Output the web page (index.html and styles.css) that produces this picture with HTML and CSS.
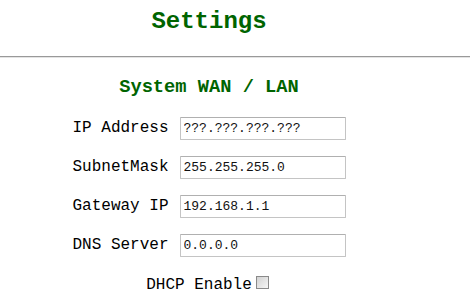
FILE: index.html
```html
<!DOCTYPE html>
<html>
<head>
    <title>Settings</title>
<link rel="stylesheet" href="styles.css">
</head>
<body>
    <div class="head">
        <h1>Settings</h1>
    </div>
    <hr class="rule">
    <div class="page">
        <h2>System WAN / LAN</h2>
        <form class="wan">
            <label for="ip">IP Address</label>
            <input id="ip" type="text" value="???.???.???.???">
            <label for="mask">SubnetMask</label>
            <input id="mask" type="text" value="255.255.255.0">
            <label for="gw">Gateway IP</label>
            <input id="gw" type="text" value="192.168.1.1">
            <label for="dns">DNS Server</label>
            <input id="dns" type="text" value="0.0.0.0">
            <div class="dhcp">
                <label for="dhcp">DHCP Enable</label><input id="dhcp" type="checkbox">
            </div>
        </form>
    </div>
</body>
</html>
```

FILE: styles.css
```css
body {
    margin: 0;
    background-color: white;
    color: black;
    font-family: "Liberation Mono", "Courier New", monospace;
    font-size: 16px;
}
.head, .page {
    width: 418px;
    text-align: center;
}
h1, h2 {
    margin: 0;
    color: #006400;
    font-weight: bold;
}
h1 {
    padding-top: 8px;
    font-size: 24px;
    line-height: 28px;
}
h2 {
    margin-top: 18px;
    font-size: 18.72px;
    line-height: 22px;
}
.rule {
    margin: 20px 0 0;
    height: 0;
    border: 0;
    border-top: 1px solid #999;
    border-bottom: 1px solid #e4e4e4;
}
.wan {
    display: inline-grid;
    grid-template-columns: auto 166px;
    column-gap: 11px;
    row-gap: 16px;
    align-items: center;
    margin-top: 19px;
    text-align: left;
}
.wan > label {
    text-align: right;
    line-height: 23px;
}
.wan input[type="text"] {
    box-sizing: border-box;
    width: 166px;
    height: 23px;
    margin: 0;
    padding: 1px 3px;
    border: 1px solid #c4c4c4;
    border-top-color: #b0b0b0;
    border-radius: 1px;
    font-family: "Liberation Mono", "Courier New", monospace;
    font-size: 13px;
    color: #111;
}
.dhcp {
    grid-column: 1 / 3;
    text-align: center;
    line-height: 20px;
}
.dhcp input {
    appearance: none;
    box-sizing: border-box;
    width: 13px;
    height: 13px;
    margin: 3px 3px 3px 4px;
    vertical-align: -3px;
    border: 1px solid #8a8a8a;
    background: linear-gradient(135deg, #d2d2d2, #f6f6f6);
}
```
